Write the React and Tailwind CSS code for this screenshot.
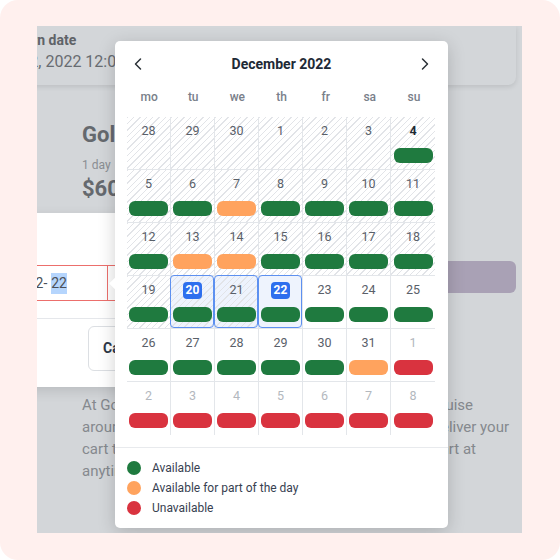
import React from "react";
import { ChevronLeft, ChevronRight } from "lucide-react";

const G = "bg-[#1f7a3f]";
const O = "bg-[#ffa35e]";
const R = "bg-[#d9333f]";

const cells = [
  { d: 28, h: 1 }, { d: 29, h: 1 }, { d: 30, h: 1 }, { d: 1, h: 1 }, { d: 2, h: 1 }, { d: 3, h: 1 }, { d: 4, h: 1, bold: 1, b: G },
  { d: 5, h: 1, b: G }, { d: 6, h: 1, b: G }, { d: 7, h: 1, b: O }, { d: 8, h: 1, b: G }, { d: 9, h: 1, b: G }, { d: 10, h: 1, b: G }, { d: 11, h: 1, b: G },
  { d: 12, h: 1, b: G }, { d: 13, h: 1, b: O }, { d: 14, h: 1, b: O }, { d: 15, h: 1, b: G }, { d: 16, h: 1, b: G }, { d: 17, h: 1, b: G }, { d: 18, h: 1, b: G },
  { d: 19, h: 1, b: G }, { d: 20, h: 1, b: G, sel: 1, badge: 1 }, { d: 21, h: 1, b: G, sel: 1 }, { d: 22, b: G, sel: 1, badge: 1 }, { d: 23, b: G }, { d: 24, b: G }, { d: 25, b: G },
  { d: 26, b: G }, { d: 27, b: G }, { d: 28, b: G }, { d: 29, b: G }, { d: 30, b: G }, { d: 31, b: O }, { d: 1, b: R, out: 1 },
  { d: 2, b: R, out: 1 }, { d: 3, b: R, out: 1 }, { d: 4, b: R, out: 1 }, { d: 5, b: R, out: 1 }, { d: 6, b: R, out: 1 }, { d: 7, b: R, out: 1 }, { d: 8, b: R, out: 1 },
];

const HATCH =
  "bg-[image:repeating-linear-gradient(135deg,#e2e4e8_0px,#e2e4e8_1px,transparent_1px,transparent_4.5px)]";

function Cell({ c, i }) {
  const col = i % 7;
  const row = Math.floor(i / 7);
  return (
    <div
      className={`relative h-[53px] flex flex-col items-center border-[#e3e6ea] ${col < 6 ? "border-r" : ""} ${row < 5 ? "border-b" : ""} ${c.h ? HATCH : ""} ${c.sel ? "bg-[#eef3fd]" : ""}`}
    >
      {c.sel ? (
        <div className="absolute -left-px -top-px right-0 bottom-0 border border-[#5d90f0] rounded-[4px]" />
      ) : null}
      <div className="mt-1.5 h-4 flex items-center justify-center">
        {c.badge ? (
          <span className="h-[17px] px-[3px] rounded-[4px] bg-[#2e6fee] text-white text-[12px] leading-[17px] font-bold">
            {c.d}
          </span>
        ) : (
          <span
            className={`text-[12.5px] leading-4 ${c.bold ? "font-bold text-[#1f2933]" : c.out ? "text-[#b3b8be]" : "text-[#596069]"}`}
          >
            {c.d}
          </span>
        )}
      </div>
      {c.b ? <div className={`mt-[9px] h-[15px] w-[39px] rounded-[6px] ${c.b}`} /> : null}
    </div>
  );
}

export default function App() {
  return (
    <div className="w-[560px] h-[560px] bg-white font-['Roboto',sans-serif]">
      <div className="w-full h-full rounded-[18px] bg-[#fff0ee] pt-[26px] pl-[37px]">
        <div className="relative w-[485px] h-[507px] overflow-hidden bg-[#d3d6d9]">
          {/* top card */}
          <div className="-ml-[20px] w-[499px] h-[59px] rounded-b-[8px] bg-[#d3d6d9] shadow-[0_2px_5px_rgba(0,0,0,0.10)]">
            <div className="pt-1 -ml-[14px] text-[14px] leading-5 font-bold text-[#5f6368] whitespace-nowrap">
              Return date
            </div>
            <div className="-ml-[28px] text-[16px] leading-6 text-[#686c71] whitespace-nowrap">
              Dec 22, 2022 12:00 PM
            </div>
          </div>

          {/* page content */}
          <div className="pl-[45px]">
            <div className="mt-[36px] text-[22px] leading-7 font-bold text-[#65696e] whitespace-nowrap">Golf Cart Rental</div>
            <div className="mt-2 text-[12px] leading-4 text-[#8a8e93]">1 day</div>
            <div className="mt-0.5 text-[22px] leading-7 font-bold text-[#65696e]">$60.00</div>
            <div className="mt-[58px] h-8 w-[434px] rounded-md bg-[#a9a1b5]" />
            <div className="mt-[101px] text-[15px] leading-[22px] text-[#85898e]">
              <div className="w-[391px] flex justify-between">
                <span>At Golf</span>
                <span>cruise</span>
              </div>
              <div className="w-[427px] flex justify-between">
                <span>around</span>
                <span>deliver your</span>
              </div>
              <div className="w-[394px] flex justify-between">
                <span>cart to</span>
                <span>start at</span>
              </div>
              <div>anytime.</div>
            </div>
          </div>

          {/* dialog */}
          <div className="absolute left-[-263px] top-[187px] w-[400px] h-[174px] bg-white shadow-[0_4px_12px_rgba(0,0,0,0.12)]">
            <div className="mt-[52px] mx-6 h-9 flex border border-[#ec6f6c]">
              <div className="w-[309px] shrink-0 flex items-center justify-end pr-[40px] border-r border-[#ec6f6c] text-[14px] text-[#4b5058]">
                <span>2022-12-</span>
                <span className="ml-[4px] bg-[#b5d5fd]">22</span>
              </div>
              <div className="flex-1" />
            </div>
            <div className="mt-[17px] border-t border-[#e5e7eb] pt-[7px] px-6">
              <div className="ml-[290px] w-[90px] h-[45px] rounded-md border border-[#dcdfe3] pl-[14px] flex items-center text-[14px] font-bold text-[#2d3748]">
                Cancel
              </div>
            </div>
          </div>

          {/* calendar popover */}
          <div className="absolute left-[78px] top-[15px] w-[333px] bg-white rounded-[5px] shadow-[0_4px_18px_rgba(0,0,0,0.18)]">
            <div className="absolute left-[-4px] top-[238px] w-[9px] h-[9px] bg-white rotate-45" />
            <div className="relative pt-[11px] px-[11px] h-[35px] flex items-center justify-between">
              <div className="w-6 h-6 flex items-center justify-center text-[#2b3137]">
                <ChevronLeft size={20} strokeWidth={1.8} />
              </div>
              <div className="text-[14px] font-bold text-[#1e2a36]">December 2022</div>
              <div className="w-6 h-6 flex items-center justify-center text-[#2b3137]">
                <ChevronRight size={20} strokeWidth={1.8} />
              </div>
            </div>
            <div className="relative mt-[11px] px-3 h-5 grid grid-cols-7 items-center text-center text-[12px] font-medium text-[#79808a]">
              {["mo", "tu", "we", "th", "fr", "sa", "su"].map((d) => (
                <div key={d}>{d}</div>
              ))}
            </div>
            <div className="relative mt-2.5 px-3">
              <div className="w-[308px] grid grid-cols-7">
                {cells.map((c, i) => (
                  <Cell key={i} c={c} i={i} />
                ))}
              </div>
            </div>
            <div className="mt-3 border-t border-[#e8eaed] pt-2.5 pb-2.5 px-3 text-[12px] text-[#374151]">
              <div className="h-5 flex items-center gap-[11px]">
                <span className="w-3.5 h-3.5 rounded-full bg-[#1f7a3f]" />
                <span>Available</span>
              </div>
              <div className="h-5 flex items-center gap-[11px]">
                <span className="w-3.5 h-3.5 rounded-full bg-[#ffa35e]" />
                <span>Available for part of the day</span>
              </div>
              <div className="h-5 flex items-center gap-[11px]">
                <span className="w-3.5 h-3.5 rounded-full bg-[#d9333f]" />
                <span>Unavailable</span>
              </div>
            </div>
          </div>
        </div>
      </div>
    </div>
  );
}
